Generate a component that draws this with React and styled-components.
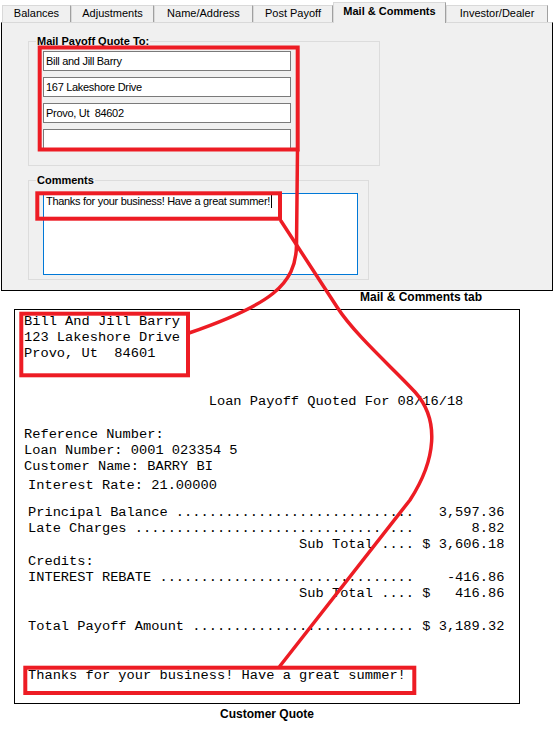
import React from "react";
import styled, { createGlobalStyle } from "styled-components";

const GlobalStyle = createGlobalStyle`
  html, body {
    margin: 0;
    padding: 0;
    background: #fff;
  }
  body {
    font-family: "Liberation Sans", Arial, sans-serif;
    color: #000;
  }
`;

const Page = styled.div`
  position: relative;
  width: 554px;
  height: 731px;
  overflow: hidden;
`;

const TabStrip = styled.div`
  display: flex;
  align-items: flex-end;
  height: 22px;
  padding-left: 2px;
`;

const Tab = styled.div`
  box-sizing: border-box;
  position: relative;
  z-index: ${(p) => (p.$active ? 2 : 1)};
  width: ${(p) => p.$w}px;
  height: ${(p) => (p.$active ? 21 : 17)}px;
  margin-bottom: ${(p) => (p.$active ? -1 : 0)}px;
  padding-top: ${(p) => (p.$active ? 2 : 1)}px;
  background: #f0f0f0;
  border: 1px solid #d9d9d9;
  border-right-color: #a0a0a0;
  border-bottom: none;
  font-size: 11px;
  line-height: 13px;
  font-weight: ${(p) => (p.$active ? 700 : 400)};
  text-align: center;
  white-space: nowrap;
`;

const Panel = styled.div`
  box-sizing: border-box;
  width: 552px;
  height: 269px;
  margin-left: 1px;
  background: #f0f0f0;
  border: 1px solid #000;
  border-top-color: #d9d9d9;
  overflow: hidden;
`;

const Group = styled.fieldset`
  box-sizing: border-box;
  width: ${(p) => p.$w}px;
  min-width: 0;
  margin: ${(p) => p.$mt}px 0 0 26px;
  padding: ${(p) => p.$pt}px 0 ${(p) => p.$pb}px 14px;
  border: 1px solid #dcdcdc;
`;

const Legend = styled.legend`
  margin-left: -7px;
  padding: 0 1px;
  font-size: 11px;
  line-height: 13px;
  font-weight: 700;
`;

const Fields = styled.div`
  display: flex;
  flex-direction: column;
  gap: 6px;
`;

const TextBox = styled.input`
  box-sizing: border-box;
  width: 248px;
  height: 20px;
  margin: 0;
  padding: 0 2px;
  border: 1px solid #7a7a7a;
  border-radius: 0;
  background: #fff;
  font-family: "Liberation Sans", Arial, sans-serif;
  font-size: 11px;
  letter-spacing: -0.3px;
  color: #000;
  outline: none;
`;

const MemoBox = styled.div`
  box-sizing: border-box;
  width: 315px;
  height: 82px;
  padding: 1px 2px;
  border: 1px solid #0078d7;
  background: #fff;
  font-size: 11px;
  line-height: 13px;
  letter-spacing: -0.3px;
`;

const Caret = styled.span`
  display: inline-block;
  width: 1px;
  height: 13px;
  margin-left: 1px;
  background: #000;
  vertical-align: top;
`;

const Caption = styled.div`
  height: ${(p) => p.$h}px;
  margin-top: ${(p) => p.$mt}px;
  padding-left: ${(p) => p.$pl || 0}px;
  width: ${(p) => (p.$w ? `${p.$w}px` : "auto")};
  margin-left: ${(p) => p.$ml || 0}px;
  text-align: ${(p) => p.$align || "left"};
  font-size: 12px;
  line-height: 14px;
  font-weight: 700;
`;

const Quote = styled.div`
  box-sizing: border-box;
  width: 506px;
  height: 395px;
  margin-left: 14px;
  padding: 3.6px 0 0 9px;
  border: 1px solid #000;
  font-family: "Liberation Mono", "Courier New", monospace;
  font-size: 13.7px;
  color: #000;
`;

const Line = styled.div`
  height: 16.4px;
  line-height: 16.4px;
  white-space: pre;
  padding-left: ${(p) => p.$indent || 0}px;
  margin-top: ${(p) => p.$gap || 0}px;
`;

const Overlay = styled.svg`
  position: absolute;
  left: 0;
  top: 0;
  pointer-events: none;
`;

const dots = (n) => ".".repeat(n);
const sp = (n) => " ".repeat(n);

const tabs = [
  { label: "Balances", w: 69 },
  { label: "Adjustments", w: 83 },
  { label: "Name/Address", w: 99 },
  { label: "Post Payoff", w: 80 },
  { label: "Mail & Comments", w: 113, active: true },
  { label: "Investor/Dealer", w: 102 },
];

const address = ["Bill and Jill Barry", "167 Lakeshore Drive", "Provo, Ut  84602", ""];

const quoteLines = [
  { text: "Bill And Jill Barry" },
  { text: "123 Lakeshore Drive" },
  { text: "Provo, Ut  84601" },
  { text: sp(22) + "Loan Payoff Quoted For 08/16/18", indent: 4, gap: 30.8 },
  { text: "Reference Number:", gap: 16.6 },
  { text: "Loan Number: 0001 023354 5" },
  { text: "Customer Name: BARRY BI" },
  { text: "Interest Rate: 21.00000", indent: 4, gap: 1.8 },
  { text: "Principal Balance " + dots(29) + sp(3) + "3,597.36", indent: 4, gap: 10.6 },
  { text: "Late Charges " + dots(34) + sp(7) + "8.82", indent: 4 },
  { text: sp(33) + "Sub Total .... $ 3,606.18", indent: 4 },
  { text: "Credits:", indent: 4 },
  { text: "INTEREST REBATE " + dots(31) + sp(4) + "-416.86", indent: 4 },
  { text: sp(33) + "Sub Total .... $   416.86", indent: 4 },
  { text: "Total Payoff Amount " + dots(27) + " $ 3,189.32", indent: 4, gap: 16.6 },
  { text: "Thanks for your business! Have a great summer!", indent: 4, gap: 32.6 },
];

export default function App() {
  return (
    <Page>
      <GlobalStyle />
      <TabStrip>
        {tabs.map((t) => (
          <Tab key={t.label} $w={t.w} $active={t.active}>
            {t.label}
          </Tab>
        ))}
      </TabStrip>
      <Panel>
        <Group $w={352} $mt={12} $pt={3} $pb={16}>
          <Legend>Mail Payoff Quote To:</Legend>
          <Fields>
            {address.map((a, i) => (
              <TextBox key={i} value={a} readOnly />
            ))}
          </Fields>
        </Group>
        <Group $w={341} $mt={8} $pt={6} $pb={4}>
          <Legend>Comments</Legend>
          <MemoBox>
            Thanks for your business! Have a great summer!
            <Caret />
          </MemoBox>
        </Group>
      </Panel>
      <Caption $h={19} $mt={-1} $pl={360}>
        Mail &amp; Comments tab
      </Caption>
      <Quote>
        {quoteLines.map((l, i) => (
          <Line key={i} $indent={l.indent} $gap={l.gap}>
            {l.text}
          </Line>
        ))}
      </Quote>
      <Caption $h={16} $mt={3} $ml={14} $w={506} $align="center">
        Customer Quote
      </Caption>

      <Overlay width="554" height="731" viewBox="0 0 554 731">
        <g fill="none" stroke="#ed1c24" strokeWidth="4">
          <rect x="39.7" y="47.5" width="258" height="102" />
          <rect x="37.3" y="193.3" width="242.7" height="25.4" />
          <rect x="21.3" y="313.7" width="166.7" height="61.6" />
          <rect x="25.3" y="667.7" width="389" height="25.3" />
        </g>
        <g fill="none" stroke="#ed1c24" strokeWidth="3.5" strokeLinecap="round">
          <path d="M297.5 150 L296.5 245 C296 285 270 305 189 333" />
          <path d="M281 221 L337 307 C355 335 395 370 415 392 C440 420 436 460 410 500 L280 666" />
        </g>
      </Overlay>
    </Page>
  );
}
